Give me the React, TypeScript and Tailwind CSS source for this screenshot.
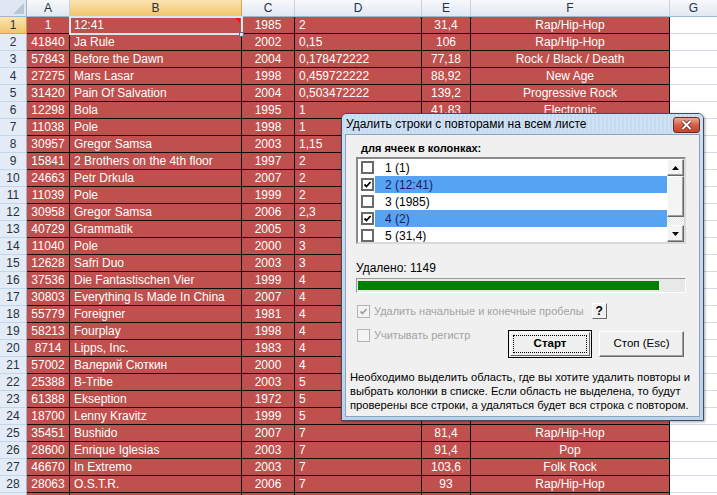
import React from "react"

const cols = [
  { w: "w-[43px]", a: "justify-center" },
  { w: "w-[172px]", a: "justify-start pl-[4px]" },
  { w: "w-[53px]", a: "justify-center" },
  { w: "w-[127px]", a: "justify-start pl-[4px]" },
  { w: "w-[49px]", a: "justify-center" },
  { w: "w-[199px]", a: "justify-center" },
]

const letters = ["A", "B", "C", "D", "E", "F"]

// rows 7..24 E/F sit under the dialog, so they stay empty
const rows: string[][] = [
  ["1", "12:41", "1985", "2", "31,4", "Rap/Hip-Hop"],
  ["41840", "Ja Rule", "2002", "0,15", "106", "Rap/Hip-Hop"],
  ["57843", "Before the Dawn", "2004", "0,178472222", "77,18", "Rock / Black / Death"],
  ["27275", "Mars Lasar", "1998", "0,459722222", "88,92", "New Age"],
  ["31420", "Pain Of Salvation", "2004", "0,503472222", "139,2", "Progressive Rock"],
  ["12298", "Bola", "1995", "1", "41,83", "Electronic"],
  ["11038", "Pole", "1998", "1", "", ""],
  ["30957", "Gregor Samsa", "2003", "1,15", "", ""],
  ["15841", "2 Brothers on the 4th floor", "1997", "2", "", ""],
  ["24663", "Petr Drkula", "2007", "2", "", ""],
  ["11039", "Pole", "1999", "2", "", ""],
  ["30958", "Gregor Samsa", "2006", "2,3", "", ""],
  ["40729", "Grammatik", "2005", "3", "", ""],
  ["11040", "Pole", "2000", "3", "", ""],
  ["12628", "Safri Duo", "2003", "3", "", ""],
  ["37536", "Die Fantastischen Vier", "1999", "4", "", ""],
  ["30803", "Everything Is Made In China", "2007", "4", "", ""],
  ["55779", "Foreigner", "1981", "4", "", ""],
  ["58213", "Fourplay", "1998", "4", "", ""],
  ["8714", "Lipps, Inc.", "1983", "4", "", ""],
  ["57002", "Валерий Сюткин", "2000", "4", "", ""],
  ["25388", "B-Tribe", "2003", "5", "", ""],
  ["61388", "Ekseption", "1972", "5", "", ""],
  ["18700", "Lenny Kravitz", "1999", "5", "", ""],
  ["35451", "Bushido", "2007", "7", "81,4", "Rap/Hip-Hop"],
  ["28600", "Enrique Iglesias", "2003", "7", "91,4", "Pop"],
  ["46670", "In Extremo", "2003", "7", "103,6", "Folk Rock"],
  ["28063", "O.S.T.R.", "2006", "7", "93", "Rap/Hip-Hop"],
  ["", "", "", "", "", ""],
]

const listItems = [
  { label: "1 (1)", checked: false },
  { label: "2 (12:41)", checked: true },
  { label: "3 (1985)", checked: false },
  { label: "4 (2)", checked: true },
  { label: "5 (31,4)", checked: false },
]

function CheckMark({ color }: { color: string }) {
  return (
    <svg width="9" height="9" viewBox="0 0 9 9">
      <polyline
        points="1.5,4.5 3.5,6.5 7.5,2"
        fill="none"
        stroke={color}
        strokeWidth="1.8"
      />
    </svg>
  )
}

function Sheet() {
  return (
    <div className="flex flex-col">
      {/* COLUMN HEADERS */}
      <div className="flex h-[17px]">
        <div className="relative w-[27px] h-[17px] bg-[#dfe7f2] border-r border-b border-[#9eb6ce]">
          <svg className="absolute right-[2px] bottom-[2px]" width="11" height="11" viewBox="0 0 11 11">
            <polygon points="11,0 11,11 0,11" fill="#b9c6d6" />
          </svg>
        </div>
        {cols.map((c, i) => (
          <div
            key={i}
            className={`${c.w} h-[17px] flex items-center justify-center border-r border-b text-[12px] text-[#27313f] ${
              i === 1
                ? "bg-gradient-to-b from-[#fbe3b0] to-[#f2c56c] border-r-[#d9a44e] border-b-[#c9973f]"
                : "bg-gradient-to-b from-[#f7f9fc] to-[#e1e8f2] border-r-[#c6d2e1] border-b-[#9eb6ce]"
            }`}
          >
            {letters[i]}
          </div>
        ))}
        <div className="w-[47px] h-[17px] flex items-center justify-center border-b border-[#9eb6ce] bg-gradient-to-b from-[#f7f9fc] to-[#e1e8f2] text-[12px] text-[#27313f]">
          G
        </div>
      </div>

      {/* ROWS */}
      {rows.map((r, ri) => (
        <div key={ri} className="flex h-[17px]">
          <div
            className={`w-[27px] h-[17px] flex items-center justify-center border-r border-b text-[12px] text-[#27313f] ${
              ri === 0
                ? "bg-gradient-to-b from-[#fbe3b0] to-[#f2c56c] border-r-[#c9973f] border-b-[#d9a44e]"
                : "bg-[#e3ebf6] border-r-[#9eb6ce] border-b-[#c5d5e9]"
            }`}
          >
            {ri < 28 ? ri + 1 : ""}
          </div>
          {cols.map((c, ci) => (
            <div
              key={ci}
              className={`relative ${c.w} h-[17px] flex items-center ${c.a} bg-[#c0504d] text-white text-[12px] border-r border-b border-[#0c0c0c] whitespace-nowrap overflow-hidden`}
            >
              {r[ci]}
              {ri === 0 && ci === 1 && (
                <span className="absolute right-[1px] top-[1px] w-0 h-0 border-l-[5px] border-l-transparent border-t-[5px] border-t-[#ff1010]" />
              )}
            </div>
          ))}
          <div className="w-[47px] h-[17px] bg-white border-b border-[#d4dae4]" />
        </div>
      ))}
    </div>
  )
}

function ScrollButton({ up }: { up: boolean }) {
  return (
    <div className="h-[17px] w-[17px] flex items-center justify-center bg-[#f4f4f4] border border-t-white border-l-white border-r-[#696969] border-b-[#696969] shadow-[inset_-1px_-1px_0_#a0a0a0]">
      <svg width="7" height="4" viewBox="0 0 7 4">
        {up ? (
          <polygon points="3.5,0 7,4 0,4" fill="#000" />
        ) : (
          <polygon points="0,0 7,0 3.5,4" fill="#000" />
        )}
      </svg>
    </div>
  )
}

function Dialog() {
  return (
    <div className="absolute left-[341px] top-[113px] w-[363px] h-[308px] flex flex-col rounded-t-[6px] border border-[#3c4c61] bg-gradient-to-b from-[#cddff3] to-[#bcd3ec] shadow-[1px_1px_3px_rgba(0,0,0,0.35)] font-['Liberation_Sans',Arial,sans-serif]">
      {/* TITLE */}
      <div className="h-[20px] flex items-center pl-[4px] pr-[3px] rounded-t-[5px] bg-[repeating-linear-gradient(90deg,#c6daf0_0px,#c6daf0_2px,#cfe1f4_2px,#cfe1f4_4px)]">
        <span className="text-[12px] text-black whitespace-nowrap">
          Удалить строки с повторами на всем листе
        </span>
        <div className="ml-auto mt-[2px] w-[27px] h-[16px] flex items-center justify-center rounded-[3px] border border-[#6e2a1e] bg-gradient-to-b from-[#e9a997] via-[#d2604a] to-[#c4442f]">
          <svg width="11" height="10" viewBox="0 0 11 10">
            <path d="M1.5 1 L9.5 9 M9.5 1 L1.5 9" stroke="#5a1d12" strokeWidth="3.4" />
            <path d="M1.5 1 L9.5 9 M9.5 1 L1.5 9" stroke="#ffffff" strokeWidth="2" />
          </svg>
        </div>
      </div>

      {/* CLIENT */}
      <div className="mx-[3px] mb-[3px] flex-1 flex flex-col px-[10px] bg-[#f0f0f0] border border-[#8ea3be] text-[11px] text-black">
        <div className="mt-[6px] ml-[5px] h-[14px] leading-[14px] font-bold whitespace-nowrap">
          для ячеек в колонках:
        </div>

        {/* LISTBOX */}
        <div className="mt-[2px] w-[330px] h-[87px] flex bg-white border-2 border-t-[#8a8a8a] border-l-[#8a8a8a] border-r-[#d9d9d9] border-b-[#d9d9d9] overflow-hidden text-[12px]">
          <div className="flex-1 flex flex-col">
            {listItems.map((it, i) => (
              <div key={i} className="h-[17px] shrink-0 flex items-center">
                <div className="ml-[3px] w-[13px] h-[13px] flex items-center justify-center bg-white border-2 border-[#6a6a6a]">
                  {it.checked && <CheckMark color="#000" />}
                </div>
                <div
                  className={`ml-[1px] flex-1 h-full flex items-center pl-[10px] whitespace-nowrap ${
                    it.checked ? "bg-[#56a3f3] text-[#1b1b5c]" : "text-black"
                  }`}
                >
                  {it.label}
                </div>
              </div>
            ))}
          </div>
          <div className="w-[17px] flex flex-col">
            <ScrollButton up />
            <div className="h-[41px] bg-[#f4f4f4] border border-t-white border-l-white border-r-[#696969] border-b-[#696969] shadow-[inset_-1px_-1px_0_#a0a0a0]" />
            <div className="flex-1 bg-[repeating-conic-gradient(#ffffff_0_25%,#e2e2e2_0_50%)] bg-[length:2px_2px]" />
            <ScrollButton up={false} />
          </div>
        </div>

        <div className="mt-[17px] h-[14px] leading-[14px] text-[12px] whitespace-nowrap">Удалено: 1149</div>

        {/* PROGRESS */}
        <div className="mt-[3px] w-[330px] h-[15px] flex py-[2px] pl-[1px] bg-[#e8e8e8] border border-t-[#9a9a9a] border-l-[#9a9a9a] border-r-white border-b-white">
          <div className="w-[301px] h-full bg-[#008000]" />
        </div>

        {/* OPTION 1 */}
        <div className="mt-[9px] h-[18px] flex items-center">
          <div className="ml-[1px] w-[13px] h-[13px] flex items-center justify-center bg-[#f4f4f4] border border-[#b3b3b3]">
            <CheckMark color="#a0a0a0" />
          </div>
          <span className="ml-[4px] text-[11px] text-[#a3a3a3] whitespace-nowrap">
            Удалить начальные и конечные пробелы
          </span>
          <div className="ml-[8px] w-[15px] h-[16px] flex items-center justify-center bg-[#f0f0f0] border border-t-white border-l-white border-r-[#696969] border-b-[#696969] font-bold text-[12px] leading-none">
            ?
          </div>
        </div>

        {/* OPTION 2 + BUTTONS */}
        <div className="mt-[8px] flex items-start">
          <div className="h-[14px] flex items-center">
            <div className="ml-[1px] w-[13px] h-[13px] bg-[#f4f4f4] border border-[#b3b3b3]" />
            <span className="ml-[4px] text-[11px] text-[#a3a3a3] whitespace-nowrap">Учитывать регистр</span>
          </div>
          <div className="ml-auto mr-[5px] mt-[2px] flex items-start gap-[7px] text-[11.5px]">
            <div className="w-[84px] h-[28px] p-[1px] bg-[#f0f0f0] border border-black">
              <div className="w-full h-full p-[2px] border border-t-white border-l-white border-r-[#696969] border-b-[#696969]">
                <div className="w-full h-full flex items-center justify-center border border-dotted border-black font-bold">
                  Старт
                </div>
              </div>
            </div>
            <div className="w-[85px] h-[26px] mt-[1px] flex items-center justify-center bg-[#f0f0f0] border border-t-white border-l-white border-r-[#696969] border-b-[#696969] shadow-[inset_-1px_-1px_0_#a0a0a0]">
              Стоп (Esc)
            </div>
          </div>
        </div>

        <div className="mt-[12px] -ml-[6px] leading-[14px] text-[11.2px] whitespace-nowrap">
          Необходимо выделить область, где вы хотите удалить повторы и
          <br />
          выбрать колонки в списке. Если область не выделена, то будут
          <br />
          проверены все строки, а удаляться будет вся строка с повтором.
        </div>
      </div>
    </div>
  )
}

export default function App() {
  return (
    <div className="relative w-[717px] h-[495px] overflow-hidden bg-white font-['Liberation_Sans',Arial,sans-serif]">
      <Sheet />

      {/* ACTIVE CELL B1 */}
      <div className="absolute left-[69px] top-[16px] w-[174px] h-[19px] border-2 border-[#d2e9ee] pointer-events-none" />
      <div className="absolute left-[239px] top-[32px] w-[5px] h-[5px] bg-[#d2e9ee] border border-[#5b6f80]" />

      <Dialog />
    </div>
  )
}
